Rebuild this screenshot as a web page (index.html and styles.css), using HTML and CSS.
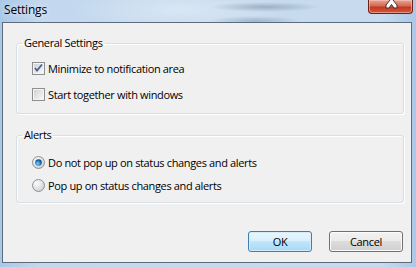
FILE: index.html
```html
<html>
    <head>
        <title>Settings</title>
        <link rel="stylesheet" href="styles.css">
    </head>
    <body>
        <div class="window">
            <div class="titlebar">
                <span class="title">Settings</span>
                <span class="close">
                    <svg width="45" height="14" viewBox="0 0 45 14">
                        <path d="M18 -4 L21 -4 L23.5 -0.5 L26 -4 L29 -4 L25 1 L29 6 L29 9 L26 9 L23.5 5.5 L21 9 L18 9 L18 6 L22 1 Z" fill="#fff" stroke="#4a2a28" stroke-width="1"/>
                    </svg>
                </span>
            </div>
            <div class="client">
                <fieldset class="group general">
                    <legend>General Settings</legend>
                    <label class="option">
                        <svg class="mark" width="13" height="13" viewBox="0 0 13 13">
                            <rect x="0.5" y="0.5" width="12" height="12" fill="#f4f4f4" stroke="#8f8f8f"/>
                            <rect x="2" y="2" width="9" height="9" fill="url(#boxfill)"/>
                            <path d="M3 6 L5 8.5 L10 2.5" fill="none" stroke="#4d5f90" stroke-width="1.8"/>
                            <defs>
                                <linearGradient id="boxfill" x1="0" y1="0" x2="1" y2="1">
                                    <stop offset="0" stop-color="#cfd3d8"/>
                                    <stop offset="1" stop-color="#f7f7f7"/>
                                </linearGradient>
                            </defs>
                        </svg>
                        Minimize to notification area
                    </label>
                    <label class="option">
                        <svg class="mark" width="13" height="13" viewBox="0 0 13 13">
                            <rect x="0.5" y="0.5" width="12" height="12" fill="#f4f4f4" stroke="#8f8f8f"/>
                            <rect x="2" y="2" width="9" height="9" fill="url(#boxfill)"/>
                        </svg>
                        Start together with windows
                    </label>
                </fieldset>
                <fieldset class="group alerts">
                    <legend>Alerts</legend>
                    <label class="option">
                        <svg class="mark" width="13" height="13" viewBox="0 0 13 13">
                            <defs>
                                <radialGradient id="ring" cx="0.35" cy="0.3" r="0.8">
                                    <stop offset="0" stop-color="#fdfdfd"/>
                                    <stop offset="1" stop-color="#c9ccd0"/>
                                </radialGradient>
                                <radialGradient id="dot" cx="0.4" cy="0.65" r="0.7">
                                    <stop offset="0" stop-color="#8fd0ff"/>
                                    <stop offset="0.5" stop-color="#2a7ec4"/>
                                    <stop offset="1" stop-color="#0c3c6e"/>
                                </radialGradient>
                            </defs>
                            <circle cx="6.5" cy="6.5" r="6" fill="url(#ring)" stroke="#8f9295"/>
                            <circle cx="6.5" cy="6.5" r="3.3" fill="url(#dot)"/>
                        </svg>
                        Do not pop up on status changes and alerts
                    </label>
                    <label class="option">
                        <svg class="mark" width="13" height="13" viewBox="0 0 13 13">
                            <circle cx="6.5" cy="6.5" r="6" fill="url(#ring)" stroke="#8f9295"/>
                        </svg>
                        Pop up on status changes and alerts
                    </label>
                </fieldset>
                <div class="buttons">
                    <button class="btn default">OK</button>
                    <button class="btn cancel">Cancel</button>
                </div>
            </div>
        </div>
    </body>
</html>
```
FILE: styles.css
```css
body {
    margin: 0;
    width: 416px;
    height: 267px;
    overflow: hidden;
    font-family: 'Open Sans', 'Noto Sans', sans-serif;
    font-size: 11px;
    letter-spacing: -0.35px;
    color: #000;
}
.window {
    height: 267px;
    display: flex;
    flex-direction: column;
    background: linear-gradient(90deg, #a9c8e8 0px, #c3d8ee 40px, #c8dbee 380px, #aac8e8 416px);
}
.titlebar {
    position: relative;
    height: 22px;
    flex: none;
    background:
        radial-gradient(ellipse 55px 5px at 265px 7px, rgba(70,90,120,.35), rgba(70,90,120,0)),
        radial-gradient(ellipse 45px 5px at 255px 21px, rgba(70,90,120,.3), rgba(70,90,120,0)),
        radial-gradient(ellipse 110px 22px at 180px 10px, rgba(255,255,255,.35), rgba(255,255,255,0));
}
.title {
    position: absolute;
    left: 4px;
    top: 2px;
    font-size: 12px;
    line-height: 16px;
    letter-spacing: -0.2px;
    text-shadow: 0 0 6px rgba(255,255,255,.9);
}
.close {
    position: absolute;
    right: 3px;
    top: 0;
    width: 45px;
    height: 14px;
    box-sizing: border-box;
    border: 1px solid #6b2117;
    border-top: none;
    border-radius: 0 0 4px 4px;
    background: linear-gradient(#e8a493 0%, #d46a52 45%, #c13a22 55%, #d6573a 100%);
    box-shadow: inset 0 0 0 1px rgba(255,210,200,.5);
    overflow: hidden;
}
.close svg {
    display: block;
    margin: -1px 0 0 -1px;
}
.client {
    flex: 1;
    margin: 0 4px 4px 2px;
    border: 1px solid #5d6b7a;
    background: #f0f0f0;
    display: flex;
    flex-direction: column;
}
.group {
    margin: 0 7px 0 13px;
    padding: 0 0 10px 5px;
    border: 1px solid #d5dfe5;
    border-radius: 3px;
    box-shadow: 1px 1px 0 #fff, inset 1px 1px 0 #fff;
    display: flex;
    flex-direction: column;
}
.group legend {
    padding: 0 2px;
    line-height: 14px;
}
.general {
    margin-top: 13px;
    padding-top: 10px;
    gap: 10px;
    padding-bottom: 11px;
}
.alerts {
    margin-top: 14px;
    padding-top: 12px;
    gap: 7px;
    padding-bottom: 9px;
}
.option {
    display: flex;
    align-items: center;
    gap: 3px;
    height: 16px;
    margin-left: 10px;
}
.mark {
    flex: none;
}
.buttons {
    display: flex;
    justify-content: flex-end;
    gap: 17px;
    margin: 28px 8px 0 0;
}
.btn {
    height: 21px;
    padding: 0;
    font-family: inherit;
    font-size: 11px;
    letter-spacing: inherit;
    color: #000;
    border: 1px solid #707070;
    border-radius: 3px;
    background: linear-gradient(#f2f2f2 0%, #ebebeb 45%, #dddddd 50%, #cfcfcf 100%);
    box-shadow: inset 0 0 0 1px #fbfbfb;
}
.default {
    width: 64px;
    border-color: #3c7fb1;
    background: linear-gradient(#eaf6fd 0%, #d9f0fc 45%, #bee6fd 50%, #a7d9f5 100%);
    box-shadow: inset 0 0 0 1px #d5ecf8;
}
.cancel {
    width: 74px;
}
```
